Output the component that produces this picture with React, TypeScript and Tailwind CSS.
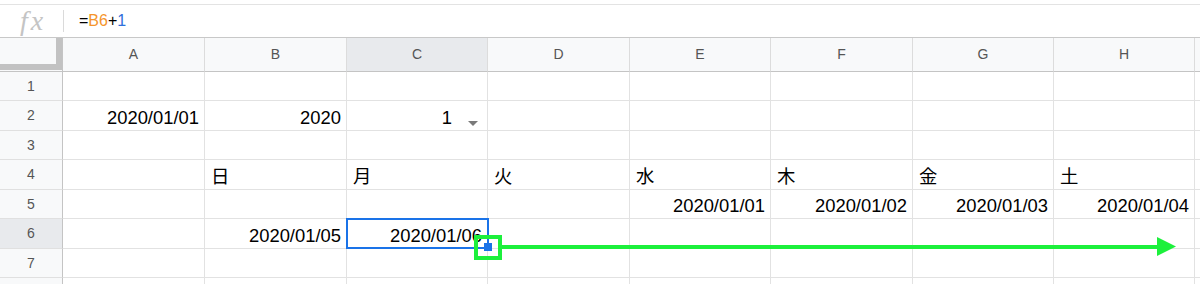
const COLS = ["A", "B", "C", "D", "E", "F", "G", "H"];

type Cell = { text: string; align: "left" | "right"; dropdown?: boolean };

const DATA: Record<number, Record<string, Cell>> = {
  2: {
    A: { text: "2020/01/01", align: "right" },
    B: { text: "2020", align: "right" },
    C: { text: "1", align: "right", dropdown: true },
  },
  4: {
    B: { text: "日", align: "left" },
    C: { text: "月", align: "left" },
    D: { text: "火", align: "left" },
    E: { text: "水", align: "left" },
    F: { text: "木", align: "left" },
    G: { text: "金", align: "left" },
    H: { text: "土", align: "left" },
  },
  5: {
    E: { text: "2020/01/01", align: "right" },
    F: { text: "2020/01/02", align: "right" },
    G: { text: "2020/01/03", align: "right" },
    H: { text: "2020/01/04", align: "right" },
  },
  6: {
    B: { text: "2020/01/05", align: "right" },
    C: { text: "2020/01/06", align: "right" },
  },
};

const font = "font-['Liberation_Sans','Noto_Sans_CJK_JP',sans-serif]";

function DataCell({ cell }: { cell?: Cell }) {
  if (!cell) return <div className="border-r border-b border-[#e2e2e2] bg-white" />;
  return (
    <div
      className={`flex items-end border-r border-b border-[#e2e2e2] bg-white pb-[3px] text-[18.4px] leading-none text-black ${
        cell.align === "right" ? "justify-end pr-[5px]" : "justify-start pl-[6px]"
      } ${cell.dropdown ? "pr-[9px]" : ""}`}
    >
      <span>{cell.text}</span>
      {cell.dropdown && (
        <svg width="10" height="5" viewBox="0 0 10 5" className="ml-[16px] mb-[1px]">
          <polygon points="0,0 10,0 5,5" fill="#7a7a7a" />
        </svg>
      )}
    </div>
  );
}

export default function App() {
  const rows = [1, 2, 3, 4, 5, 6, 7, 8];
  return (
    <div className={`relative h-[284px] w-[1200px] overflow-hidden bg-white ${font}`}>
      {/* formula bar */}
      <div className="mt-[4px] flex h-[34px] items-center border-t border-b border-t-[#e3e3e3] border-b-[#c8c8c8]">
        <div className="flex w-[63px] justify-start pl-[20px]">
          <span className="font-['Liberation_Serif',serif] text-[28px] italic leading-none tracking-[3px] text-[#c4c4c4]">
            fx
          </span>
        </div>
        <div className="h-[22px] w-px bg-[#dadada]" />
        <div className="pl-[15px] text-[16px] text-black">
          =<span className="text-[#f5952b]">B6</span>+<span className="text-[#2f6fdb]">1</span>
        </div>
      </div>

      {/* grid */}
      <div className="grid grid-cols-[63px_142px_142px_141px_142px_141px_142px_141px_141px_1fr] grid-rows-[34px_29px_30px_29px_30px_29px_30px_29px_29px]">
        <div className="border-r border-b border-[#c4c4c4] bg-[#f8f9fa]">
          <div className="h-[32px] border-r-[6px] border-b-[6px] border-[#c2c2c2]" />
        </div>
        {COLS.map((c) => (
          <div
            key={c}
            className={`flex items-center justify-center border-r border-b border-r-[#dcdcdc] border-b-[#c4c4c4] text-[14px] text-[#555] ${
              c === "C" ? "bg-[#e8eaed]" : "bg-[#f8f9fa]"
            }`}
          >
            {c}
          </div>
        ))}
        <div className="border-b border-[#c4c4c4] bg-[#f8f9fa]" />

        {rows.map((r) => (
          <div key={r} className="contents">
            <div
              className={`flex items-center justify-center border-r border-b border-r-[#c4c4c4] border-b-[#e0e0e0] text-[14px] text-[#555] ${
                r === 6 ? "bg-[#e8eaed]" : "bg-[#f8f9fa]"
              }`}
            >
              {r < 8 ? r : ""}
            </div>
            {COLS.map((c) => (
              <DataCell key={c} cell={DATA[r]?.[c]} />
            ))}
            <div className="border-b border-[#e2e2e2] bg-white" />
          </div>
        ))}
      </div>

      {/* selection on C6 */}
      <div className="pointer-events-none absolute left-[346px] top-[218px] h-[31px] w-[143px] border-2 border-[#1a73e8]" />
      {/* fill handle */}
      <div className="absolute left-[484px] top-[243px] h-[8px] w-[8px] bg-[#1a73e8]" />

      {/* annotation: green box + arrow */}
      <svg className="pointer-events-none absolute left-0 top-0" width="1200" height="284">
        <rect x="476" y="237" width="24" height="21" fill="none" stroke="#1cf03c" strokeWidth="4" />
        <line x1="500" y1="247" x2="1160" y2="247" stroke="#1cf03c" strokeWidth="4" />
        <polygon points="1157,237 1176,246.5 1157,256" fill="#1cf03c" />
      </svg>
    </div>
  );
}
